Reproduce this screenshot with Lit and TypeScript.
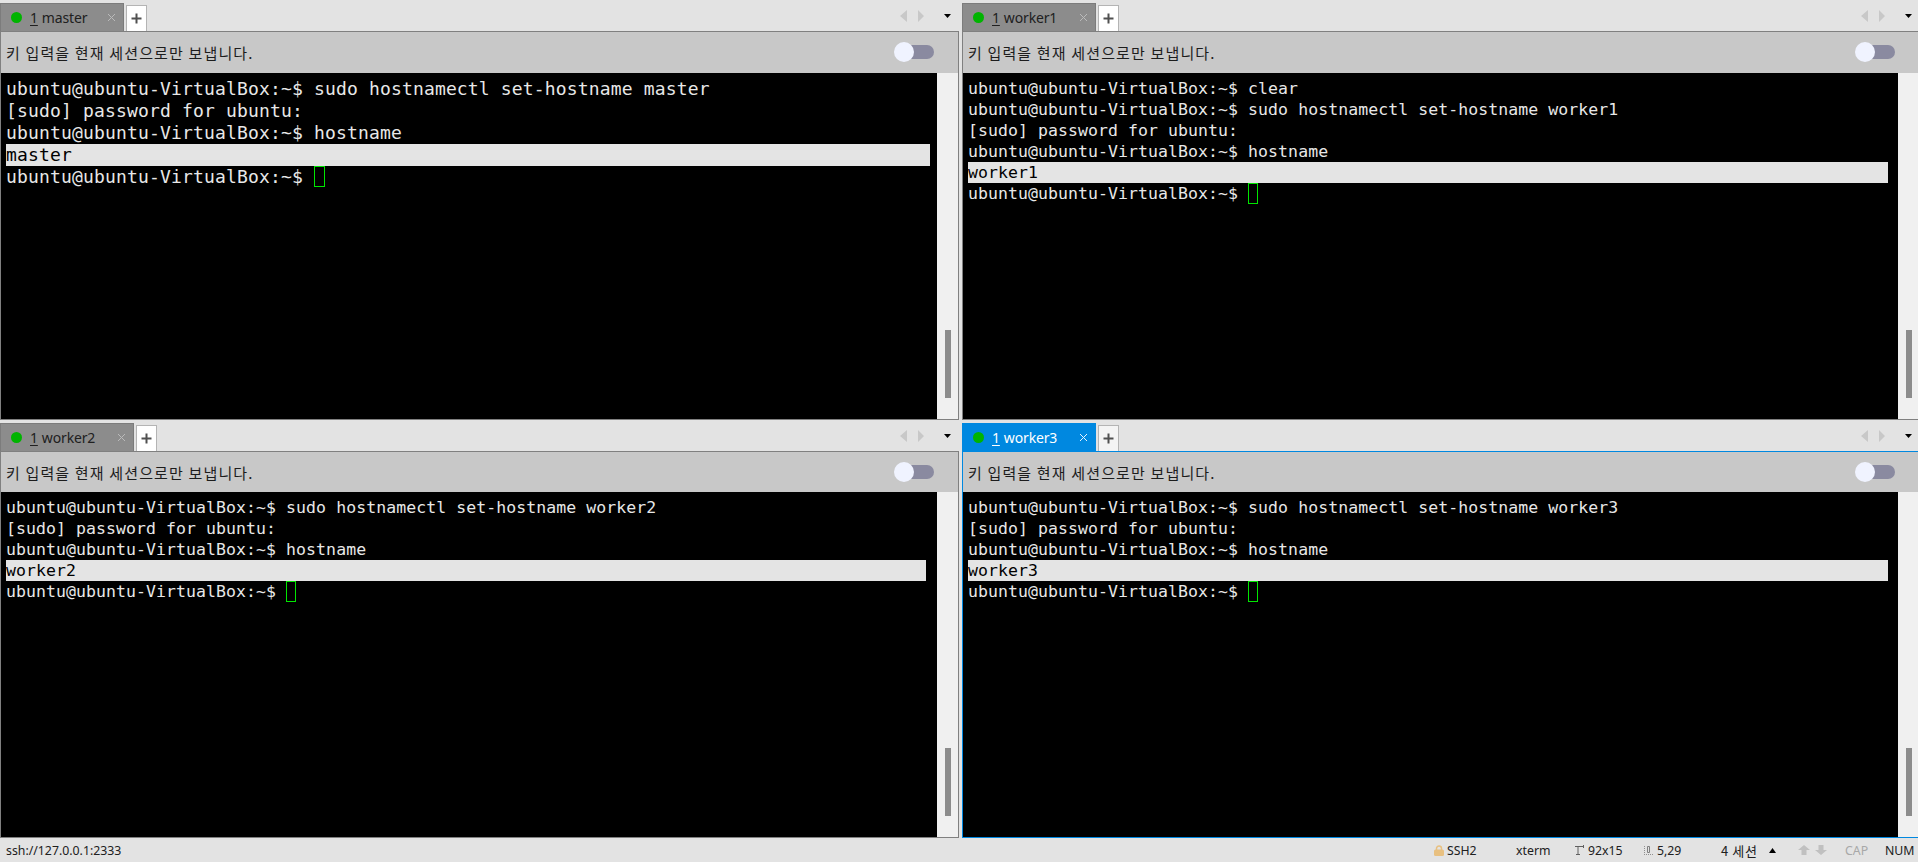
import { LitElement, html, css } from "lit";
import { customElement, property } from "lit/decorators.js";

const P = "ubuntu@ubuntu-VirtualBox:~$ ";

interface Line { t: string; hl?: boolean; cursor?: boolean }

@customElement("term-pane")
class TermPane extends LitElement {
  @property() name = "";
  @property({ type: Boolean }) active = false;
  @property({ type: Boolean }) big = false;
  @property({ type: Boolean }) first = false;
  @property({ type: Number }) tabw = 134;
  @property({ attribute: false }) lines: Line[] = [];
  static styles = css`
    :host { display: flex; flex-direction: column; height: 100%; min-width: 0; }
    .pane { display: flex; flex-direction: column; height: 100%; }
    .strip { height: 31px; display: flex; align-items: flex-end; background: #e3e3e3; flex: none; }
    .tab { height: 28px; background: #8c8c8c; border: 1px solid #7c7c7c; border-bottom: 0; box-sizing: border-box; display: flex; align-items: center; color: #202020; font: 14px "Noto Sans", sans-serif; letter-spacing: -0.15px; flex: none; }
    .active .tab { background: #0088e0; border-color: #0088e0; color: #fff; }
    .dot { width: 11px; height: 11px; border-radius: 50%; background: #00b400; margin-left: 10px; flex: none; }
    .num { margin-left: 8px; text-decoration: underline; text-underline-offset: 2px; }
    .lbl { margin-left: 4px; }
    .x { margin-left: auto; margin-right: 7px; width: 9px; height: 9px; display: block; }
    .plus { width: 21px; height: 26px; margin-left: 2px; box-sizing: border-box; background: #fff; border: 1px solid #b4b4b4; border-bottom: 0; display: flex; align-items: center; justify-content: center; flex: none; }
    .active .plus { background: #f4f4f4; }
    .nav { margin-left: auto; display: flex; align-items: center; height: 31px; padding-right: 8px; align-self: flex-start; box-sizing: border-box; }
    .nav svg { display: block; }
    .body { flex: 1; min-height: 0; display: flex; flex-direction: column; border: 1px solid #808080; box-sizing: border-box; }
    .active .body { border-color: #0088e0; }
    .info { height: 40px; flex: none; background: #c8c8c8; display: flex; align-items: center; padding-left: 5px; font: 15px "Noto Sans CJK KR", sans-serif; color: #1c1c1c; position: relative; letter-spacing: 1.15px; }
    .first .info { height: 41px; }
    .toggle { position: absolute; right: 24px; top: 10px; width: 40px; height: 20px; }
    .toggle svg { display: block; }
    .main { flex: 1; min-height: 0; display: flex; }
    .term { flex: 1; background: #000; min-width: 0; padding: 5px 5px 0; font-family: "DejaVu Sans Mono", monospace; color: #e8e8e8; overflow: hidden; }
    .big .term { font-size: 18px; line-height: 22px; letter-spacing: 0.16px; }
    .small .term { font-size: 16.5px; line-height: 21px; letter-spacing: 0.07px; }
    .line { white-space: pre; height: 21px; }
    .big .line { height: 22px; }
    .hl { background: #e4e4e4; color: #000; width: 920px; }
    .big .hl { width: 924px; }
    .cur { display: inline-block; width: 10px; height: 21px; border: 1px solid #00e600; box-sizing: border-box; vertical-align: top; }
    .big .cur { width: 11px; }
    .sb { width: 21px; background: #f0f0f0; flex: none; display: flex; flex-direction: column; justify-content: flex-end; align-items: center; padding-bottom: 21px; box-sizing: border-box; }
    .thumb { width: 6px; height: 68px; background: #8c8c8c; }
  `;
  render() {
    const cls = `pane ${this.active ? "active" : ""} ${this.big ? "big" : "small"} ${this.first ? "first" : ""}`;
    return html`<div class=${cls}>
      <div class="strip">
        <div class="tab" style="width:${this.tabw}px">
          <span class="dot"></span><span class="num">1</span><span class="lbl">${this.name}</span>
          <svg class="x" viewBox="0 0 9 9"><path d="M1 1l7 7M8 1l-7 7" stroke="${this.active ? "#e8f4ff" : "#bbb"}" stroke-width="1" fill="none"/></svg>
        </div>
        <div class="plus"><svg width="11" height="11" viewBox="0 0 11 11"><path d="M5.500 0.500v10M0.500 5.500h10" stroke="#505050" stroke-width="2"/></svg></div>
        <div class="nav">
          <svg width="51" height="12" viewBox="0 0 51 12">
            <path d="M7 0v12L0 6zM18 0v12l6-6z" fill="#c8c8c8"/>
            <path d="M44 4h7l-3.500 4z" fill="#000"/>
          </svg>
        </div>
      </div>
      <div class="body">
        <div class="info">키 입력을 현재 세션으로만 보냅니다.
          <div class="toggle"><svg width="40" height="20" viewBox="0 0 40 20"><rect x="7" y="3" width="33" height="14" rx="7" fill="#8a8aa0"/><circle cx="10" cy="10" r="10" fill="#f0f3ff"/></svg></div>
        </div>
        <div class="main">
          <div class="term">${this.lines.map((l) => html`<div class="line ${l.hl ? "hl" : ""}">${l.t}${l.cursor ? html`<span class="cur"></span>` : ""}</div>`)}</div>
          <div class="sb"><div class="thumb"></div></div>
        </div>
      </div>
    </div>`;
  }
}

@customElement("app-root")
class AppRoot extends LitElement {
  static styles = css`
    :host { display: block; width: 1918px; height: 862px; overflow: hidden; background: #e3e3e3; }
    .panes { display: grid; grid-template-columns: 959px 958px; column-gap: 3px; grid-template-rows: 420px 418px; }
    .status { height: 24px; display: flex; align-items: center; font: 12.3px "Noto Sans", sans-serif; color: #202020; background: #e3e3e3; padding-left: 6px; }
    .right { margin-left: auto; display: flex; align-items: center; }
    .it { display: flex; align-items: center; gap: 3px; white-space: nowrap; flex: none; }
    .kr { font-family: "Noto Sans CJK KR", sans-serif; font-size: 13px; letter-spacing: 0.6px; }
    .dim { color: #a8a8a8; }
    svg { display: block; flex: none; }
  `;
  render() {
    const mk = (arr: string[], host: string): Line[] => [...arr.map((t) => ({ t, hl: t === host })), { t: P, cursor: true }];
    return html`
      <div class="panes">
        <term-pane name="master" big first .tabw=${124} .lines=${mk([P + "sudo hostnamectl set-hostname master", "[sudo] password for ubuntu:", P + "hostname", "master"], "master")}></term-pane>
        <term-pane name="worker1" first .lines=${mk([P + "clear", P + "sudo hostnamectl set-hostname worker1", "[sudo] password for ubuntu:", P + "hostname", "worker1"], "worker1")}></term-pane>
        <term-pane name="worker2" .lines=${mk([P + "sudo hostnamectl set-hostname worker2", "[sudo] password for ubuntu:", P + "hostname", "worker2"], "worker2")}></term-pane>
        <term-pane name="worker3" active .lines=${mk([P + "sudo hostnamectl set-hostname worker3", "[sudo] password for ubuntu:", P + "hostname", "worker3"], "worker3")}></term-pane>
      </div>
      <div class="status">
        <span>ssh://127.0.0.1:2333</span>
        <div class="right">
          <div class="it" style="width:82px"><svg width="10" height="11" viewBox="0 0 10 11"><path d="M2.500 5V3.500a2.500 2.500 0 0 1 5 0V5" stroke="#e8c080" fill="none" stroke-width="1.500"/><rect x="0" y="4.500" width="10" height="6.500" rx="1.500" fill="#e8c080"/></svg><span>SSH2</span></div>
          <div class="it" style="width:59px"><span>xterm</span></div>
          <div class="it" style="width:69px"><svg width="10" height="11" viewBox="0 0 10 11"><path d="M0 1.500h8M8.500 0v3M3 1.500v8M1 9.500h4" stroke="#606060" fill="none"/></svg><span>92x15</span></div>
          <div class="it" style="width:77px"><svg width="10" height="9" viewBox="0 0 10 9"><path d="M0.500 0v7M0 8.500h10" stroke="#909090" stroke-dasharray="1 1" fill="none"/><path d="M3.500 0.500h2v6h-2z" stroke="#808080" fill="none"/></svg><span>5,29</span></div>
          <div class="it kr" style="width:77px"><span>4 세션</span><svg style="margin-left:9px" width="7" height="5" viewBox="0 0 7 5"><path d="M3.500 0L7 5H0z" fill="#000"/></svg></div>
          <div class="it" style="width:47px"><svg width="29" height="10" viewBox="0 0 29 10"><path d="M6 0l6 5H8.500v5h-5V5H0zM23 10l-6-5h3.500V0h5v5H29z" fill="#c0c0c0"/></svg></div>
          <div class="it dim" style="width:40px"><span>CAP</span></div>
          <div class="it" style="width:33px"><span>NUM</span></div>
        </div>
      </div>
    `;
  }
}
